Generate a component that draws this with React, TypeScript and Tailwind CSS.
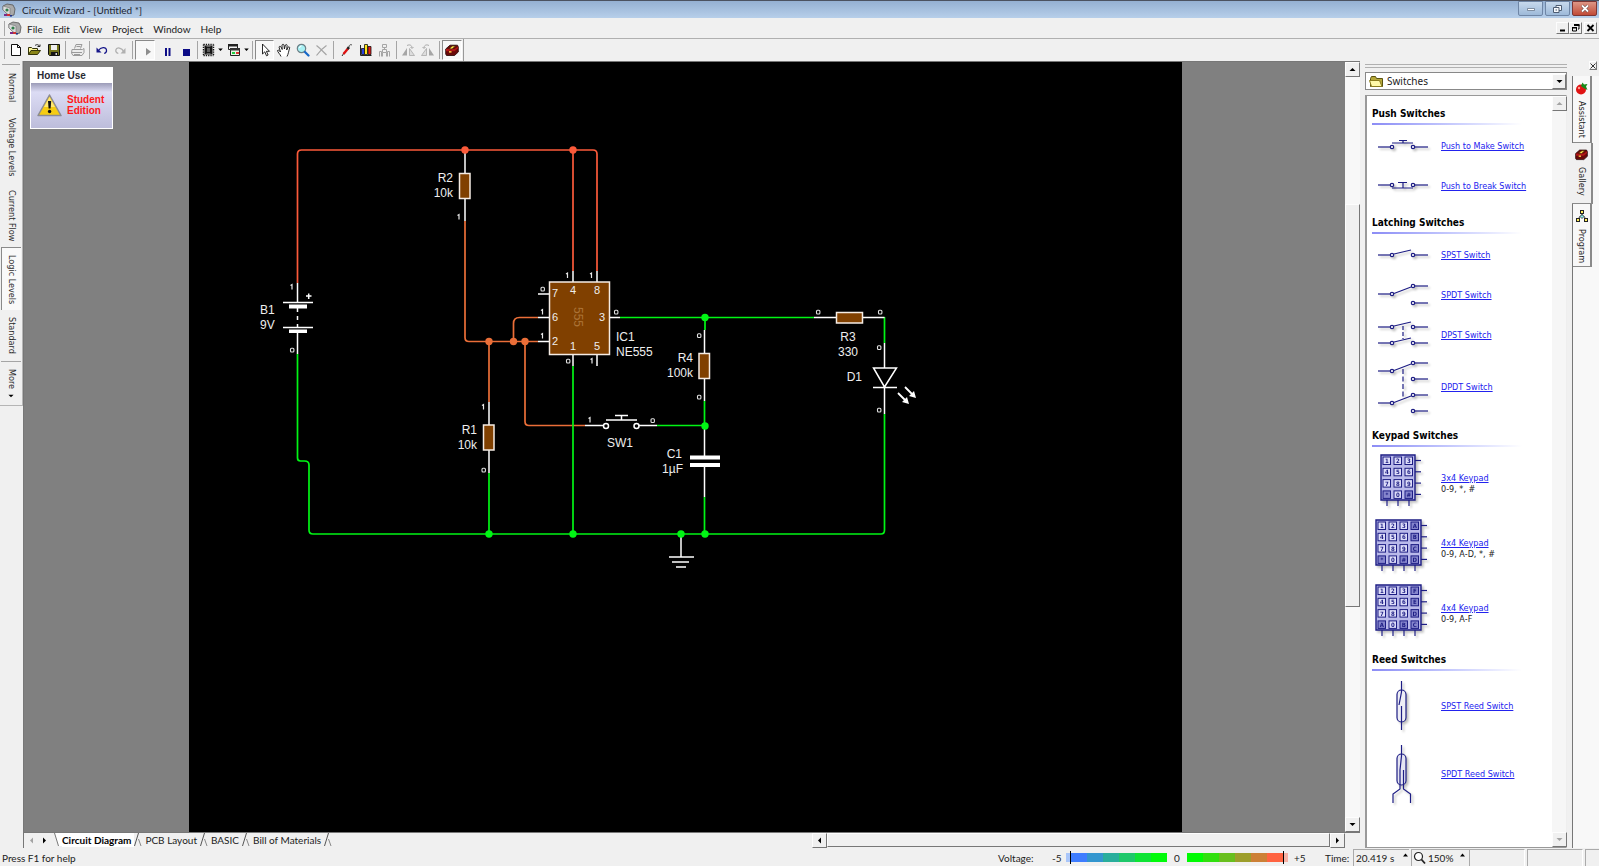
import React from "react";

type Kids = { children?: React.ReactNode };

const RED = "#fb5a3a";
const ORANGE = "#ea6e38";
const GREEN = "#00f514";
const BROWN = "#804000";

/* ---------- small icons ---------- */

function Icon({ children, w = 16, h = 16, label }: Kids & { w?: number; h?: number; label?: string }) {
  return (
    <svg width={w} height={h} viewBox={`0 0 ${w} ${h}`} className="shrink-0" aria-label={label} aria-hidden={!label}>
      {children}
    </svg>
  );
}

function AppIcon() {
  return (
    <Icon w={14} h={14}>
      <path d="M1 3 5 1l6 1 2 4-1 6-4 1-5-4-2-2z" fill="#a9a9a9" stroke="#555" strokeWidth="0.8" />
      <path d="M1 3l7 2v8l-5-4-2-2z" fill="#dcdcdc" stroke="#777" strokeWidth="0.6" />
      <circle cx="5" cy="7" r="1.6" fill="#2f7d4a" />
      <path d="M2 11h3v2H2z" fill="#7b2a86" />
      <path d="M5 11h3v2H5z" fill="#c33" />
      <path d="M8 12h2v1.500H8z" fill="#238" />
    </Icon>
  );
}

function Toolbox({ size = 14 }: { size?: number }) {
  return (
    <svg width={size} height={size} viewBox="0 0 14 14" className="shrink-0" aria-hidden>
      <path d="M.7 6 5 2.200h7.500L13.300 4v5L9.500 12.500H1.500L.7 11z" fill="#6a0a0a" stroke="#240303" strokeWidth="0.8" />
      <path d="M1 6h8.500L13 3.500v1.800L9.500 8.300H1z" fill="#b01616" />
      <path d="M4 5.500 7.500 3H10.500L7 6z" fill="#ffe94d" stroke="#3a1a00" strokeWidth="0.6" />
      <path d="M4 8h2.500v1.700H4z" fill="#f1b53c" />
    </svg>
  );
}

const icons = {
  newDoc: (
    <Icon w={13} h={14}>
      <path d="M2.500 1.500h6l3 3v8h-9z" fill="#fff" stroke="#111" />
      <path d="M8.500 1.500v3h3" fill="none" stroke="#111" />
    </Icon>
  ),
  open: (
    <Icon w={15} h={14}>
      <path d="M1.500 11.500v-7h3l1 1h5v2" fill="#fbf59b" stroke="#33330a" />
      <path d="M1.500 11.500 4 7.500h9.500l-3 4z" fill="#8a8618" stroke="#33330a" />
      <path d="M8 2.500c2-1.500 4-1 4.500 1.500M10.500 3.500h2.500v-2" fill="none" stroke="#222" />
    </Icon>
  ),
  save: (
    <Icon w={14} h={14}>
      <path d="M1.500 1.500h11v11h-10l-1-1z" fill="#74741a" stroke="#111" />
      <path d="M4 2h6v5H4z" fill="#eee" />
      <path d="M4 9h7v4H4z" fill="#151515" />
      <path d="M8.500 10h1.500v2H8.500z" fill="#ddd" />
    </Icon>
  ),
  print: (
    <Icon w={15} h={14}>
      <path d="M4.500 5.500 6 1.500h6l-1.500 4M2 6.500h10.500l1.500-1v4l-2 3H3L1.500 10z" fill="#ececec" stroke="#9a9a9a" />
      <path d="M2 9.500h10M4 11.500h6M6.500 3.500h4" stroke="#9a9a9a" />
    </Icon>
  ),
  undo: (
    <Icon w={13} h={13}>
      <path d="M1.500 3.500v5H6.500z" fill="#16168a" />
      <path d="M3.500 6.500c2-3.500 7.500-4 8-.5 .3 2-.8 3-2.300 3.500" fill="none" stroke="#16168a" strokeWidth="1.200" />
    </Icon>
  ),
  redo: (
    <Icon w={13} h={13}>
      <path d="M11.500 4v5.500H6.500z" fill="#b0b0b0" />
      <path d="M9.500 7.500C8 3.500 2.500 2.800 1.800 6c-.3 2 1 3 2.500 3.500" fill="none" stroke="#b0b0b0" strokeWidth="1.200" />
    </Icon>
  ),
  play: (
    <Icon w={18} h={14}>
      <path d="M10 5v7.500l5-3.700z" fill="#8e8e8e" />
    </Icon>
  ),
  pause: (
    <Icon w={18} h={14}>
      <path d="M9 5h2v8H9zM12.500 5h2v8h-2z" fill="#0c0c86" />
    </Icon>
  ),
  stop: (
    <Icon w={16} h={14}>
      <path d="M6 6h7v7H6z" fill="#0c0c86" />
    </Icon>
  ),
  chip: (
    <Icon w={13} h={14}>
      <path d="M2.500 2.500h8v9h-8z" fill="#161616" />
      <path d="M1.500 1.500v11M11.500 1.500v11M1.500 1.500h10M1.500 12.500h10" stroke="#161616" strokeWidth="1.400" strokeDasharray="1.300 1" />
      <path d="M5 5h3v4H5z" fill="#5c5c5c" />
      <path d="M4.500 3.500h4M4.500 10.500h4" stroke="#777" strokeWidth="0.800" />
    </Icon>
  ),
  windows: (
    <Icon w={14} h={14}>
      <path d="M1.500 1.500h9v5h-9z" fill="#f4f4f4" stroke="#222" />
      <path d="M1 1h10v2.500H1z" fill="#222" />
      <path d="M3.500 5.500h9v7h-9z" fill="#e9f6e5" stroke="#222" />
      <path d="M3 5h10v2.500H3z" fill="#333" />
      <path d="M5 9h3v2H5z" fill="#2c4" />
      <path d="M9 9h3v2H9z" fill="#d33" />
    </Icon>
  ),
  pointer: (
    <Icon w={12} h={14}>
      <path d="M3.500 1v10l2.300-2.200 1.700 4 1.600-.8-1.700-3.700h3.100z" fill="#fff" stroke="#111" strokeWidth="0.9" />
    </Icon>
  ),
  hand: (
    <Icon w={16} h={15}>
      <path
        d="M5 13.500C4 11 1.500 9 1.500 7.500c.8-.8 2 0 3 1.500L3 4c.6-1.200 1.500-.8 2 0l1.200 2.500L6 2c.5-1 1.600-1 2 0l.4 4 1-4c.6-.9 1.500-.6 1.700.4L10.700 7l1.500-3c.8-.6 1.600 0 1.400 1-.8 2.500-1.200 6-2.600 8.500"
        fill="#fff"
        stroke="#111"
        strokeWidth="0.9"
      />
    </Icon>
  ),
  magnify: (
    <Icon w={14} h={14}>
      <circle cx="5.500" cy="5.500" r="4.200" fill="#a9f1f4" stroke="#6c7f86" strokeWidth="1.200" />
      <path d="M3.500 5a2 2 0 0 1 2-2" fill="none" stroke="#fff" />
      <path d="m9 9 3.500 3.500" stroke="#1668c8" strokeWidth="2.200" strokeLinecap="round" />
    </Icon>
  ),
  del: (
    <Icon w={13} h={13}>
      <path d="M1.500 1.500c4 3 7 6.500 10 9.500M11.500 1.500C7 4.500 4 8 1.500 11.500" fill="none" stroke="#a4a4a4" strokeWidth="1.200" />
    </Icon>
  ),
  probe: (
    <Icon w={13} h={14}>
      <path d="m2 13 2-3" stroke="#222" />
      <path d="M3.500 11 8 5.500" stroke="#d11" strokeWidth="2.400" />
      <path d="m7.500 6 1.500-1.800" stroke="#222" strokeWidth="2.600" />
      <path d="M9 4c0-2 1.500-3 3-2" fill="none" stroke="#555" />
    </Icon>
  ),
  books: (
    <Icon w={14} h={14}>
      <path d="M1.500 2v10.500h11" fill="none" stroke="#222" />
      <path d="M2.500 5.500h3v6h-3z" fill="#2a42e0" stroke="#111" strokeWidth="0.800" />
      <path d="M5.500 1.500h3v10h-3z" fill="#ffe61c" stroke="#111" strokeWidth="0.800" />
      <path d="M9 3.500h3v8H9z" fill="#e01c1c" stroke="#111" strokeWidth="0.800" />
    </Icon>
  ),
  tree: (
    <Icon w={13} h={14}>
      <path d="M4.500 1.500h4v3h-4zM6.500 4.500v2M4.500 6.500h4v3h-4zM1.500 8.500h2v5M11.500 8.500h-2v5M4.500 9.500v4M8.500 9.500v4M1.500 8.500v5M11.500 8.500v5" fill="none" stroke="#a6a6a6" />
    </Icon>
  ),
  rotL: (
    <Icon w={15} h={14}>
      <path d="M1 12.500 6 5v7.500z" fill="#a6a6a6" />
      <path d="M8.500 5.500v7h5z" fill="#ddd" stroke="#aaa" strokeWidth="0.8" />
      <path d="M6 2.500c3-1.500 5 0 5 2.500M9.500 4l1.500 1.500L12.500 4" fill="none" stroke="#aaa" />
    </Icon>
  ),
  rotR: (
    <Icon w={15} h={14}>
      <path d="M14 12.500 9 5v7.500z" fill="#a6a6a6" />
      <path d="M6.500 5.500v7h-5z" fill="#ddd" stroke="#aaa" strokeWidth="0.8" />
      <path d="M9 2.500C6 1 4 2.500 4 5M2.500 4 4 5.500 5.500 4" fill="none" stroke="#aaa" />
    </Icon>
  ),
};

/* ---------- chrome ---------- */

function Arrow({ dir, muted, size = 7 }: { dir: "up" | "down" | "left" | "right"; muted?: boolean; size?: number }) {
  const d = { up: "M.5 5h6L3.500 2z", down: "M.5 2h6L3.500 5z", left: "M5 .5v6L2 3.500z", right: "M2 .5v6l3-3z" }[dir];
  return (
    <svg width={size} height={size} viewBox="0 0 7 7" aria-hidden>
      <path d={d} fill={muted ? "#a3a3a3" : "#000"} />
    </svg>
  );
}

const raised = "border border-t-[#fdfdfd] border-l-[#fdfdfd] border-b-[#777] border-r-[#777] bg-[#f0f0f0]";

function ScrollButton({ dir, muted }: { dir: "up" | "down" | "left" | "right"; muted?: boolean }) {
  return (
    <button aria-label={`Scroll ${dir}`} className={`flex h-[15px] w-[15px] shrink-0 items-center justify-center ${raised}`}>
      <Arrow dir={dir} muted={muted} />
    </button>
  );
}

function TitleBar() {
  const btn = "flex h-[15px] w-[25px] items-center justify-center rounded-b-[2px] border border-[#6f86a6] bg-linear-to-b from-[#c7d9ec] to-[#9db9d9]";
  return (
    <header className="flex h-[18px] shrink-0 items-center border-t border-[#4c5260] bg-linear-to-b from-[#95b0d2] to-[#b7cfea] pl-[2px] pr-[2px]">
      <AppIcon />
      <h1 className="ml-[6px] flex-1 text-[10px] leading-none text-[#1c2430]">Circuit Wizard - [Untitled *]</h1>
      <div className="flex gap-[2px] self-start">
        <button aria-label="Minimize" className={btn}>
          <Icon w={10} h={9}>
            <path d="M1.500 4.500h7v2h-7z" fill="#fff" stroke="#5a6a80" strokeWidth="0.700" />
          </Icon>
        </button>
        <button aria-label="Restore" className={btn}>
          <Icon w={11} h={10}>
            <path d="M4 1.500h5.500v5H4z" fill="#f5f8fc" stroke="#4d5c72" />
            <path d="M1.500 3.500H7v5H1.500z" fill="#f5f8fc" stroke="#4d5c72" />
            <path d="M3.500 5.500H5v1H3.500z" fill="#4d5c72" />
          </Icon>
        </button>
        <button
          aria-label="Close"
          className="flex h-[15px] w-[25px] items-center justify-center rounded-b-[2px] border border-[#7d3634] bg-linear-to-b from-[#dd9585] to-[#c04a36]"
        >
          <Icon w={10} h={9}>
            <path d="m2 1.500 6 6M8 1.500l-6 6" stroke="#5b3b3b" strokeWidth="3" />
            <path d="m2 1.500 6 6M8 1.500l-6 6" stroke="#fff" strokeWidth="1.800" />
          </Icon>
        </button>
      </div>
    </header>
  );
}

function MenuBar() {
  const small = `flex h-[12px] w-[13px] items-center justify-center ${raised}`;
  return (
    <nav className="flex h-[21px] shrink-0 items-center border-b border-[#b0b0b0] pl-[4px] pr-[2px]">
      <span className="h-[15px] w-[2px] border-l border-[#a9a9a9]" />
      <span className="ml-[2px] flex">
        <AppIcon />
      </span>
      <ul className="ml-[5px] flex flex-1 gap-[10px] pt-px text-[10px] leading-none text-[#222]">
        {["File", "Edit", "View", "Project", "Window", "Help"].map((m) => (
          <li key={m}>
            <button className="block">{m}</button>
          </li>
        ))}
      </ul>
      <button aria-label="Minimize document" className={small}>
        <Icon w={9} h={8}>
          <path d="M2 5.500h5v2H2z" />
        </Icon>
      </button>
      <button aria-label="Restore document" className={small}>
        <Icon w={9} h={8}>
          <path d="M3 1h5v4H7M1.500 3.500h4v3.500h-4z" fill="none" stroke="#000" />
          <path d="M3 0h5.500v2H3zM1 3h5v1.500H1z" />
        </Icon>
      </button>
      <button aria-label="Close document" className={`ml-[2px] ${small}`}>
        <Icon w={9} h={8}>
          <path d="m1.500 1 6 6M7.500 1l-6 6" stroke="#000" strokeWidth="1.800" />
        </Icon>
      </button>
    </nav>
  );
}

function Tool({ children, label, pressed, wide }: Kids & { label: string; pressed?: boolean; wide?: boolean }) {
  return (
    <button
      aria-label={label}
      aria-pressed={pressed}
      className={`flex h-[20px] shrink-0 items-center justify-center ${wide ? "w-[20px]" : "w-[19px]"} ${
        pressed ? "border border-b-[#fff] border-r-[#fff] border-t-[#8a8a8a] border-l-[#8a8a8a] bg-[#f8f8f8]" : ""
      }`}
    >
      {children}
    </button>
  );
}

function DropTool({ children, label }: Kids & { label: string }) {
  return (
    <button aria-label={label} className="flex h-[20px] w-[25px] shrink-0 items-center gap-[3px] pl-[2px]">
      {children}
      <svg width="5" height="4" viewBox="0 0 5 4" aria-hidden>
        <path d="M.2 .5h4.600L2.500 3z" />
      </svg>
    </button>
  );
}

const Sep = () => <span className="mx-[2px] h-[18px] w-px shrink-0 bg-[#a5a5a5]" />;

function ToolBar() {
  return (
    <div role="toolbar" className="flex h-[22px] w-[464px] shrink-0 items-center border-r border-[#999] pl-[4px]">
      <span className="mr-px h-[18px] w-px bg-[#a9a9a9]" />
      <Tool label="New">{icons.newDoc}</Tool>
      <Tool label="Open">{icons.open}</Tool>
      <Tool label="Save">{icons.save}</Tool>
      <Sep />
      <Tool label="Print">{icons.print}</Tool>
      <Sep />
      <Tool label="Undo">{icons.undo}</Tool>
      <Tool label="Redo">{icons.redo}</Tool>
      <Sep />
      <Tool label="Run" pressed wide>{icons.play}</Tool>
      <Tool label="Pause" wide>{icons.pause}</Tool>
      <Tool label="Stop" wide>{icons.stop}</Tool>
      <Sep />
      <DropTool label="Components">{icons.chip}</DropTool>
      <DropTool label="Windows">{icons.windows}</DropTool>
      <Sep />
      <Tool label="Select" pressed>{icons.pointer}</Tool>
      <Tool label="Pan">{icons.hand}</Tool>
      <Tool label="Zoom">{icons.magnify}</Tool>
      <Tool label="Delete">{icons.del}</Tool>
      <Sep />
      <Tool label="Probe" wide>{icons.probe}</Tool>
      <Tool label="Graph">{icons.books}</Tool>
      <Tool label="Arrange">{icons.tree}</Tool>
      <Sep />
      <Tool label="Rotate left">{icons.rotL}</Tool>
      <Tool label="Rotate right">{icons.rotR}</Tool>
      <Sep />
      <Tool label="Gallery" pressed wide>
        <Toolbox />
      </Tool>
    </div>
  );
}

function StyleBar() {
  const item = "flex w-[20px] items-center justify-center [writing-mode:vertical-rl]";
  return (
    <aside className="w-[23px] shrink-0">
      <div className="flex h-[345px] w-[23px] flex-col items-center border-r border-b border-[#b5b5b5] pt-[3px] font-['DejaVu_Sans_Condensed','DejaVu_Sans',sans-serif] text-[9px] leading-none text-[#2b2b2b]">
        <span className="h-px w-[18px] shrink-0 bg-[#a5a5a5]" />
        <button className={`${item} h-[45px]`}>Normal</button>
        <button className={`${item} h-[74px]`}>Voltage Levels</button>
        <button className={`${item} h-[64px]`}>Current Flow</button>
        <button aria-pressed className={`${item} h-[63px] border-t border-l border-[#8a8a8a] bg-[#f9f9f9]`}>Logic Levels</button>
        <button className={`${item} h-[51px]`}>Standard</button>
        <span className="h-px w-[20px] shrink-0 bg-[#a5a5a5]" />
        <button className={`${item} h-[43px] gap-[4px]`}>
          More
          <Arrow dir="down" size={6} />
        </button>
      </div>
    </aside>
  );
}

/* ---------- circuit ---------- */

function Logic({ x, y, v }: { x: number; y: number; v: 0 | 1 }) {
  return v ? (
    <path d={`M${x - 1.500} ${y - 1.500}l1.500-1v5`} fill="none" stroke="#e8e8e8" strokeWidth="1.200" />
  ) : (
    <rect x={x - 1.500} y={y - 1.800} width="3.400" height="3.800" rx="1" fill="none" stroke="#e0e0e0" strokeWidth="1.100" />
  );
}

function Circuit() {
  const dots: [number, number, string][] = [
    [465, 150, RED], [573, 150, RED],
    [489, 341.5, ORANGE], [513.5, 341.5, ORANGE], [525, 341.5, ORANGE],
    [705, 317.5, GREEN], [705, 426, GREEN],
    [489, 534, GREEN], [573, 534, GREEN], [681, 534, GREEN], [705, 534, GREEN],
  ];
  const labels: [number, number, string, "start" | "middle" | "end"][] = [
    [260, 314, "B1", "start"], [260, 329, "9V", "start"],
    [453, 182, "R2", "end"], [453, 197, "10k", "end"],
    [477, 434, "R1", "end"], [477, 449, "10k", "end"],
    [616, 341, "IC1", "start"], [616, 356, "NE555", "start"],
    [693, 362, "R4", "end"], [693, 377, "100k", "end"],
    [620, 447, "SW1", "middle"],
    [682, 458, "C1", "end"], [683, 473, "1µF", "end"],
    [848, 341, "R3", "middle"], [848, 356, "330", "middle"],
    [862, 381, "D1", "end"],
  ];
  const pins: [number, number, string][] = [
    [573, 295, "4"], [597, 295, "8"], [555, 298, "7"], [555, 322, "6"], [555, 346, "2"],
    [602, 322, "3"], [573, 351, "1"], [597, 351, "5"],
  ];
  const logic: [number, number, 0 | 1][] = [
    [292, 287, 1], [292, 350, 0], [459, 217, 1], [567.5, 275.5, 1], [591.5, 275.5, 1],
    [542.5, 289, 0], [542.5, 312, 1], [542.5, 336, 1], [616, 312, 0], [568, 361, 0], [592, 361, 1],
    [483.5, 407, 1], [483.5, 470, 0], [590, 420, 1], [652.5, 420.5, 0],
    [699, 335.5, 0], [699, 397, 0], [818, 312, 0], [880, 312, 0], [879, 347.500, 0], [879, 410, 0],
  ];
  return (
    <svg width="993" height="771" viewBox="189 62 993 771" role="img" aria-label="Circuit diagram" className="shrink-0 font-['Liberation_Sans',Arial,sans-serif]">
      <g fill="none" strokeWidth="1.700">
        <path d="M297.500 283V154q0-4 4-4H593q4 0 4 4V271M573 150V271" stroke={RED} />
        <path d="M465 221V337.500q0 4 4 4H538M513.500 341V323.500q0-6 6-6H538M489 341V402M525 341V421.500q0 4 4 4H585" stroke={ORANGE} />
        <path
          d="M297.500 354V458q0 3 3 3h4q4.500 0 4.500 4V530q0 4 4 4H881q3.500 0 3.500-4V414M489 473V534M573 366V534M620 317.500H814M705 317V330M704.500 401V426M657 425.500H705M704.500 497V534M884.500 317V343"
          stroke={GREEN}
        />
      </g>
      <g fill="none" stroke="#fff" strokeWidth="1.500">
        <path d="M465 152V221M489 402V473M704.500 330V401M814 317.500H884.500M884.500 343V414" />
        <path d="M573 271V282M597 271V282M538 294H549M538 317.500H549M538 341.500H549M609 317.500H620M573 354V366M597 354V366" />
        <path d="M297.500 283V303M283 302.500H313M283 327.500H313M297.500 331V354M306 296h5.500M308.700 293.500v5.500" />
        <path d="M297.500 308v4M297.500 316v4M297.500 324v4" />
        <path d="M585 425.500H603M639 425.500H657M606 420H637M621.500 416V420M615 415.500H628" />
        <circle cx="606" cy="426" r="2.500" />
        <circle cx="636.500" cy="426" r="2.500" />
        <path d="M704.500 428V456M704.500 466V497" />
        <path d="M681 536V557M669 557H694M672 562H689M676 567H686" />
        <path d="M873.500 368H896.500L884.500 387zM873 387.500H897" fill="#000" />
        <path d="M898 393l7 7M905 387l7 7" strokeWidth="1.800" />
      </g>
      {dots.map(([x, y, c]) => (
        <circle key={`${x},${y}`} cx={x} cy={y} r="3.700" fill={c} />
      ))}
      <path d="M909 404l-7-2 5-5zM916 398l-7-2 5-5z" fill="#fff" />
      <path d="M289 304.500h18v4h-18zM289 329.500h18v3.500h-18zM690 455.500h30v4h-30zM690 463h30v4h-30z" fill="#fff" />
      <g fill={BROWN} stroke="#f5ece4" strokeWidth="1.500">
        <path d="M459.500 173.500h10.500v25h-10.500zM483.500 425h10.500v25h-10.500zM699 353.500h10.500v25H699zM836.500 312.500h26v10.500h-26zM549.500 282h60v72.500h-60z" />
      </g>
      <text transform="translate(574 307) rotate(90)" fontSize="12" fill="#ab7336">555</text>
      <g fill="#eee" fontSize="12">
        {labels.map(([x, y, t, a]) => (
          <text key={`${x},${y}`} x={x} y={y} textAnchor={a}>{t}</text>
        ))}
        {pins.map(([x, y, t]) => (
          <text key={t} x={x} y={y - 1} textAnchor="middle" fontSize="11">{t}</text>
        ))}
      </g>
      {logic.map(([x, y, v]) => (
        <Logic key={`${x},${y}`} x={x} y={y} v={v} />
      ))}
    </svg>
  );
}

function Notice() {
  return (
    <section className="ml-[6px] mt-[5px] h-[62px] w-[83px] border border-white bg-[#cfcfea] font-['Liberation_Sans',Arial,sans-serif] text-[10px] font-bold leading-none">
      <h2 className="flex h-[15px] items-center bg-white pl-[6px] text-[#2a2a33]">Home Use</h2>
      <div className="flex h-[45px] items-center gap-[4px] bg-linear-to-b from-[#9c9cb8] via-[#dcdcf4] via-20% to-[#bdbddb] pl-[5px]">
        <svg width="27" height="25" viewBox="0 0 27 25" aria-label="Warning">
          <path d="M13.500 2 25 22.500H2z" fill="#f6cc12" stroke="#8b8b92" strokeWidth="1.500" strokeLinejoin="round" />
          <path d="M13.500 4 8 14l11 0z" fill="#ffe873" />
          <path d="M12 8h3.200l-.6 7.500h-2z" fill="#111" />
          <circle cx="13.600" cy="18.500" r="1.700" fill="#111" />
        </svg>
        <p className="pb-[2px] leading-[11px] text-[#ff1a1a]">
          Student
          <br />
          Edition
        </p>
      </div>
    </section>
  );
}

function SheetTabs() {
  const tabs = ["Circuit Diagram", "PCB Layout", "BASIC", "Bill of Materials"];
  const edge = (
    <svg width="8" height="14" viewBox="0 0 8 14" className="shrink-0" aria-hidden>
      <path d="M4.500 0 .5 13" fill="none" stroke="#555" />
      <path d="M4.500 6l2.500 7" fill="none" stroke="#888" />
    </svg>
  );
  return (
    <div className="mb-px flex h-[15px] shrink-0 items-stretch border-t border-[#777] text-[10px] leading-none text-[#222]">
      <button aria-label="Previous sheet" className="flex w-[14px] items-center justify-center"><Arrow dir="left" muted /></button>
      <button aria-label="Next sheet" className="flex w-[13px] items-center justify-center"><Arrow dir="right" /></button>
      <svg width="8" height="14" viewBox="0 0 8 14" className="ml-[3px]" aria-hidden>
        <path d="M.5 0 4.500 13H8V0z" fill="#fff" />
        <path d="M.5 0 4.500 13" stroke="#777" fill="none" />
      </svg>
      <div role="tablist" className="flex flex-1 items-stretch">
        {tabs.map((t, i) => (
          <React.Fragment key={t}>
            <button role="tab" aria-selected={i === 0} className={i === 0 ? "bg-white pr-[3px] font-bold text-black" : "px-[3px]"}>
              {t}
            </button>
            {edge}
          </React.Fragment>
        ))}
      </div>
      <div className="flex w-[533px] shrink-0 bg-[#f6f6f6]">
        <ScrollButton dir="left" />
        <div className={`flex-1 ${raised}`} />
        <ScrollButton dir="right" />
      </div>
      <span className="w-[15px] shrink-0" />
    </div>
  );
}

function Document() {
  return (
    <main className="flex min-w-0 flex-1 flex-col border-l border-t border-[#777]">
      <div className="flex min-h-0 flex-1">
        <div className="w-[165px] shrink-0 bg-[#808080]">
          <Notice />
        </div>
        <div className="flex min-w-0 flex-1 overflow-hidden bg-black">
          <Circuit />
        </div>
        <div className="w-[163px] shrink-0 bg-[#808080]" />
        <div className="flex w-[15px] shrink-0 flex-col bg-[#f8f8f8]">
          <ScrollButton dir="up" />
          <div className="h-[127px]" />
          <div className={`h-[403px] ${raised}`} />
          <div className="flex-1" />
          <ScrollButton dir="down" />
        </div>
      </div>
      <SheetTabs />
    </main>
  );
}

/* ---------- gallery ---------- */

const INK = "#1d1d84";

function Sym({ w, h, children }: Kids & { w: number; h: number }) {
  return (
    <svg width={w} height={h} viewBox={`0 0 ${w} ${h}`} className="drop-shadow-[2px_2px_1px_rgba(0,0,0,0.25)]" fill="none" stroke={INK} strokeWidth="1.200" aria-hidden>
      {children}
    </svg>
  );
}

function Lead({ x, y, right }: { x: number; y: number; right?: boolean }) {
  return (
    <>
      <path d={right ? `M${x + 2} ${y}h13` : `M${x - 2} ${y}h-12`} />
      <circle cx={x} cy={y} r="1.700" fill="#fff" />
    </>
  );
}

const DX = 4;
const PushMake = (
  <Sym w={58} h={20}>
    <Lead x={DX + 15} y={11} />
    <Lead x={DX + 36} y={11} right />
    <path d={`M${DX + 15} 7h21M${DX + 26} 4v3M${DX + 22} 4.500h8`} />
  </Sym>
);
const PushBreak = (
  <Sym w={58} h={20}>
    <Lead x={DX + 15} y={9} />
    <Lead x={DX + 36} y={9} right />
    <path d={`M${DX + 15} 12h21M${DX + 26} 6.500v5M${DX + 21} 6.500h9`} />
  </Sym>
);
const Spst = (
  <Sym w={58} h={20}>
    <Lead x={DX + 15} y={10} />
    <Lead x={DX + 36} y={10} right />
    <path d={`M${DX + 17} 9l17-4`} />
  </Sym>
);
const Spdt = (
  <Sym w={58} h={30}>
    <Lead x={DX + 15} y={14} />
    <Lead x={DX + 36} y={6} right />
    <Lead x={DX + 36} y={23} right />
    <path d={`M${DX + 17} 13.500l17-6.500`} />
  </Sym>
);
const Dpst = (
  <Sym w={58} h={30}>
    <Lead x={DX + 15} y={7} />
    <Lead x={DX + 36} y={7} right />
    <Lead x={DX + 15} y={23} />
    <Lead x={DX + 36} y={23} right />
    <path d={`M${DX + 17} 6l17-4M${DX + 17} 22l17-4`} />
    <path d={`M${DX + 26} 6v13`} strokeDasharray="4 2" />
  </Sym>
);
const Dpdt = (
  <Sym w={58} h={60}>
    <Lead x={DX + 15} y={14} />
    <Lead x={DX + 36} y={6} right />
    <Lead x={DX + 36} y={22} right />
    <Lead x={DX + 15} y={46} />
    <Lead x={DX + 36} y={38} right />
    <Lead x={DX + 36} y={54} right />
    <path d={`M${DX + 17} 13.500l17-6.500M${DX + 17} 45.500l17-6.500`} />
    <path d={`M${DX + 26} 12v29`} strokeDasharray="5 2.500" />
  </Sym>
);

function Keypad({ rows, dark }: { rows: string[]; dark: string }) {
  const cols = rows[0].length;
  const w = cols * 11 + 2;
  return (
    <Sym w={w + 8} h={56}>
      <path d={`M1 2h${w - 1}v45H1z`} fill="#b9b9ea" strokeWidth="1.400" />
      {rows.map((row, r) => (
        <g key={row}>
          <path d={`M${w} ${7.5 + r * 11.3}h6`} />
          {row.split("").map((k, c) => (
            <g key={k}>
              <rect x={3 + c * 11} y={4 + r * 11.3} width="7.500" height="7.500" fill={dark.includes(k) ? "#8585cc" : "#dcdcf8"} strokeWidth="1" />
              <text x={6.8 + c * 11} y={10 + r * 11.3} fontSize="6" fontWeight="bold" textAnchor="middle" fill={INK} stroke="none">
                {k}
              </text>
            </g>
          ))}
        </g>
      ))}
      {rows[0].split("").map((k, c) => (
        <path key={k} d={`M${7 + c * 11} 47v6`} />
      ))}
    </Sym>
  );
}

const ReedSpst = (
  <Sym w={20} h={54}>
    <rect x="5" y="11" width="9" height="32" rx="4.500" fill="#eeeef6" />
    <path d="M9.500 2v11l-2.500 13M9.500 51V27" />
  </Sym>
);
const ReedSpdt = (
  <Sym w={24} h={62}>
    <rect x="7" y="11" width="9" height="31" rx="4.500" fill="#e5e5f2" />
    <path d="M11.500 2v11l-1.500 14v19l-7 5v9M13.500 27v19l7 5v9" />
  </Sym>
);

type Part = { name: string; note?: string; art: React.ReactNode };
const groups: { title: string; row: string; parts: Part[] }[] = [
  { title: "Push Switches", row: "h-[40px]", parts: [{ name: "Push to Make Switch", art: PushMake }, { name: "Push to Break Switch", art: PushBreak }] },
  {
    title: "Latching Switches",
    row: "min-h-[40px]",
    parts: [{ name: "SPST Switch", art: Spst }, { name: "SPDT Switch", art: Spdt }, { name: "DPST Switch", art: Dpst }, { name: "DPDT Switch", art: <div className="py-[2px]">{Dpdt}</div> }],
  },
  {
    title: "Keypad Switches",
    row: "h-[65px]",
    parts: [
      { name: "3x4 Keypad", note: "0-9, *, #", art: <Keypad rows={["123", "456", "789", "*0#"]} dark="*#" /> },
      { name: "4x4 Keypad", note: "0-9, A-D, *, #", art: <Keypad rows={["123A", "456B", "789C", "*0#D"]} dark="ABCD*#" /> },
      { name: "4x4 Keypad", note: "0-9, A-F", art: <Keypad rows={["123F", "456E", "789D", "A0BC"]} dark="ABCDEF" /> },
    ],
  },
  { title: "Reed Switches", row: "h-[68px]", parts: [{ name: "SPST Reed Switch", art: ReedSpst }, { name: "SPDT Reed Switch", art: ReedSpdt }] },
];

function Gallery() {
  return (
    <aside className="flex w-[207px] shrink-0 flex-col pl-[5px] font-['DejaVu_Sans_Condensed','DejaVu_Sans',sans-serif]">
      <div className="h-[11px] shrink-0 pt-[3px]">
        <div className="h-[4px] border-y border-[#b0b0b0]" />
      </div>
      <label className="relative flex h-[18px] shrink-0 items-center border border-[#888] bg-white">
        <svg width="15" height="13" viewBox="0 0 15 13" className="ml-[3px] shrink-0" aria-hidden>
          <path d="M1.500 11.500v-8l1-2h4l1 2h6v8z" fill="#b5a83a" stroke="#5a5210" />
          <path d="M2.500 11.500l-2-6h10l2.500 6z" fill="#fff9a8" stroke="#8a7c1c" />
        </svg>
        <select aria-label="Category" defaultValue="Switches" className="ml-[3px] h-full flex-1 appearance-none bg-white font-['Noto_Sans',sans-serif] text-[10px] leading-none text-[#222] outline-none">
          <option>Switches</option>
        </select>
        <span className={`pointer-events-none flex h-[15px] w-[14px] items-center justify-center ${raised}`}>
          <Arrow dir="down" />
        </span>
      </label>
      <div className="mt-[5px] flex min-h-0 flex-1 border border-l-2 border-[#999] border-r-[#eee] bg-white">
        <div className="min-w-0 flex-1 overflow-hidden pl-[5px] pt-px">
          {groups.map((g) => (
            <section key={g.title}>
              <h2 className="flex h-[26px] items-center pt-[7px] text-[10px] font-bold leading-none text-black">{g.title}</h2>
              <div className="mb-px h-[2px] w-[150px] bg-linear-to-r from-[#8c8cf5] to-white" />
              <ul>
                {g.parts.map((p, i) => (
                  <li key={i} className={`flex items-center ${g.row}`}>
                    <span className="flex w-[69px] shrink-0 items-center justify-center pr-[10px]">{p.art}</span>
                    <span className={`text-[9px] leading-[12px] text-[#222] ${p.note ? "pt-[4px]" : ""}`}>
                      <a href="#part" className="block whitespace-nowrap text-[#2222ee] underline">{p.name}</a>
                      {p.note && <span className="block leading-[10px]">{p.note}</span>}
                    </span>
                  </li>
                ))}
              </ul>
            </section>
          ))}
        </div>
        <div className="flex w-[14px] shrink-0 flex-col justify-between bg-[#f6f6f6]">
          <ScrollButton dir="up" muted />
          <ScrollButton dir="down" muted />
        </div>
      </div>
    </aside>
  );
}

function SideTabs() {
  const tab = "flex w-[19px] flex-col items-center gap-[6px] border-r-2 border-b border-[#8a8a8a] pt-[5px] text-[9px] leading-none text-[#222]";
  return (
    <aside className="flex w-[32px] shrink-0 flex-col font-['DejaVu_Sans_Condensed','DejaVu_Sans',sans-serif]">
      <button aria-label="Close panel" className={`mr-[2px] mb-[6px] flex h-[9px] w-[8px] items-center justify-center self-end ${raised}`}>
        <svg width="6" height="6" viewBox="0 0 6 6" aria-hidden>
          <path d="m.5.5 5 5M5.500.5l-5 5" stroke="#333" />
        </svg>
      </button>
      <div role="tablist" className="ml-[5px] flex flex-1 flex-col border-l border-[#777] bg-[#f8f8f8]">
        <button role="tab" className={`${tab} h-[67px]`}>
          <svg width="13" height="14" viewBox="0 0 13 14" aria-hidden>
            <circle cx="6" cy="8.500" r="5" fill="#e01414" />
            <circle cx="4" cy="7" r="1.200" fill="#ff9a8a" />
            <path d="M6 5 7.500 1.500l1.500 2 3.500-.5L11 5.500 12.500 9 8.500 7z" fill="#178a1a" />
          </svg>
          <span className="[writing-mode:vertical-rl]">Assistant</span>
        </button>
        <button role="tab" aria-selected className={`${tab} -ml-px h-[61px] w-[21px] bg-[#f0f0f0]`}>
          <Toolbox size={13} />
          <span className="[writing-mode:vertical-rl]">Gallery</span>
        </button>
        <button role="tab" className={`${tab} h-[63px]`}>
          <svg width="14" height="14" viewBox="0 0 14 14" fill="none" stroke="#222" aria-hidden>
            <path d="M7 4v2L3.500 9M7 6l3.500 3" />
            <rect x="5.500" y="1.500" width="3" height="3" fill="#ffef5a" />
            <path d="M7 5.500 9 7.500 7 9.500 5 7.500z" fill="#8ef0f0" strokeWidth="0.800" />
            <rect x="1.500" y="9.500" width="3" height="3" fill="#ffef5a" />
            <rect x="9.500" y="9.500" width="3" height="3" fill="#ffef5a" />
          </svg>
          <span className="[writing-mode:vertical-rl]">Program</span>
        </button>
      </div>
    </aside>
  );
}

/* ---------- status ---------- */

function Ramp({ colors, edge }: { colors: string[]; edge: "left" | "right" }) {
  return (
    <span className={`flex h-[9px] w-[101px] ${edge === "left" ? "flex-row bg-[#a9c6fa] pl-[4px]" : "flex-row-reverse bg-[#f5b3a6] pr-[4px]"}`}>
      <span className="-my-[2px] w-px bg-black" />
      {colors.map((c) => (
        <span key={c} className="flex-1" style={{ backgroundColor: c }} />
      ))}
    </span>
  );
}

function UpMark() {
  return (
    <svg width="5" height="4" viewBox="0 0 5 4" aria-hidden>
      <path d="M0 3.500h5L2.500.5z" />
    </svg>
  );
}

function StatusBar() {
  const cell = "flex h-[17px] shrink-0 items-center border-t border-l border-[#aaa]";
  return (
    <footer className="flex h-[18px] shrink-0 items-center pl-[2px] pt-px text-[10px] leading-none text-[#222]">
      <p className="flex-1">Press F1 for help</p>
      <span className="w-[54px]">Voltage:</span>
      <span className="w-[14px]">-5</span>
      <Ramp edge="left" colors={["#3f7dff", "#3396cf", "#29ae9c", "#1ec86a", "#0ee434", "#00fb0a"]} />
      <span className="w-[20px] text-center">0</span>
      <Ramp edge="right" colors={["#ff6341", "#cd8036", "#9d9e2b", "#68bf1d", "#31e00e", "#00fb02"]} />
      <span className="ml-[6px] w-[31px]">+5</span>
      <span className="w-[28px]">Time:</span>
      <span className={`${cell} w-[56px] justify-between pl-[2px]`}>
        20.419 s
        <span className="pb-[6px] pr-px"><UpMark /></span>
      </span>
      <span className={`${cell} ml-[2px] w-[58px] pl-px`}>
        <Icon w={14} h={14}>
          <circle cx="5.500" cy="5.500" r="4" fill="#fff" stroke="#222" strokeWidth="1.200" />
          <path d="m8.500 8.500 3.500 4" stroke="#222" strokeWidth="1.800" />
        </Icon>
        <span className="ml-px flex-1">150%</span>
        <span className="pb-[6px] pr-[4px]"><UpMark /></span>
      </span>
      <span className={`${cell} w-[56px] border-r border-r-white`} />
      <span className={`${cell} ml-[2px] w-[56px] border-r border-r-white`} />
      <span className={`${cell} ml-[2px] w-[14px]`} />
    </footer>
  );
}

export default function App() {
  return (
    <div className="flex h-screen flex-col overflow-hidden bg-[#f0f0f0] font-['Lato',sans-serif]">
      <TitleBar />
      <MenuBar />
      <ToolBar />
      <div className="flex min-h-0 flex-1">
        <StyleBar />
        <Document />
        <Gallery />
        <SideTabs />
      </div>
      <StatusBar />
    </div>
  );
}
